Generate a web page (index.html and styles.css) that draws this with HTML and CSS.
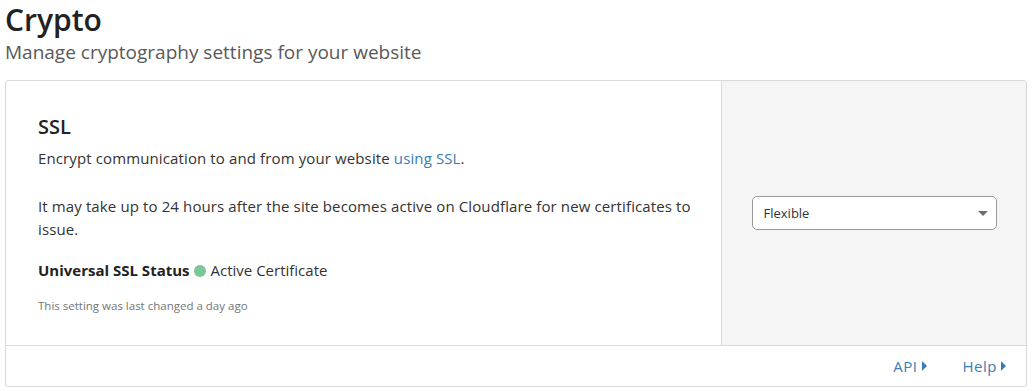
FILE: index.html
```html
<!DOCTYPE html>
<html>
<head>
<meta charset="utf-8">
<link rel="stylesheet" href="styles.css">
</head>
<body>
<div class="page">
  <h1 class="title">Crypto</h1>
  <p class="subtitle">Manage cryptography settings for your website</p>
  <div class="card">
    <div class="card-body">
      <div class="main">
        <h2 class="heading">SSL</h2>
        <p class="text">Encrypt communication to and from your website <a class="link" href="#">using SSL</a>.</p>
        <p class="text gap">It may take up to 24 hours after the site becomes active on Cloudflare for new certificates to issue.</p>
        <p class="status"><strong>Universal SSL Status</strong><span class="dot"></span>Active Certificate</p>
        <p class="changed">This setting was last changed a day ago</p>
      </div>
      <div class="side">
        <div class="select">
          <span>Flexible</span>
          <span class="caret"></span>
        </div>
      </div>
    </div>
    <div class="card-footer">
      <a class="flink" href="#">API<span class="tri"></span></a>
      <a class="flink" href="#">Help<span class="tri"></span></a>
    </div>
  </div>
</div>
</body>
</html>
```
FILE: styles.css
```css
* { box-sizing: border-box; }
html, body { margin: 0; padding: 0; background: #fff; }
body { font-family: "Open Sans", "Noto Sans", sans-serif; color: #333; }
.page { padding: 0 7px 0 5px; }
.title { margin: 0; padding-top: 2px; font-size: 30px; font-weight: 600; line-height: 36px; color: #222; }
.subtitle { margin: 0; font-size: 19px; line-height: 28px; color: #595959; }
.card { margin-top: 14px; border: 1px solid #d9d9d9; border-radius: 3px; }
.card-body { display: flex; border-bottom: 1px solid #d9d9d9; }
.main { flex: 1; padding: 32px 20px 31px 32px; }
.heading { margin: 0; font-size: 20px; font-weight: 600; line-height: 28px; color: #222; }
.text { margin: 6px 0 0; font-size: 15px; line-height: 23px; color: #333; letter-spacing: 0.12px; }
.text.gap { margin-top: 25px; }
.link { color: #3a7cb6; text-decoration: none; }
.status { margin: 18px 0 0; font-size: 15px; line-height: 23px; display: flex; align-items: center; color: #333; }
.status strong { font-weight: 700; color: #222; }
.dot { display: inline-block; width: 12px; height: 12px; border-radius: 50%; background: #7bc795; margin: 0 5px 0 4px; }
.changed { margin: 16px 0 0; font-size: 11.5px; line-height: 16px; color: #757575; }
.side { width: 305px; flex: none; background: #f5f5f6; border-left: 1px solid #d9d9d9; display: flex; align-items: center; justify-content: center; }
.select { width: 245px; height: 34px; background: #fff; border: 1px solid #9a9a9a; border-radius: 5px; display: flex; align-items: center; justify-content: space-between; padding: 0 8px 0 11px; font-size: 13px; color: #333; }
.caret { width: 0; height: 0; border-left: 5px solid transparent; border-right: 5px solid transparent; border-top: 5px solid #6f6f6f; }
.card-footer { height: 40px; display: flex; justify-content: flex-end; align-items: center; gap: 36px; padding-right: 20px; }
.flink { color: #3a7cb6; text-decoration: none; font-size: 15px; letter-spacing: 0.5px; display: flex; align-items: center; }
.tri { width: 0; height: 0; border-top: 5px solid transparent; border-bottom: 5px solid transparent; border-left: 5px solid #3a7cb6; margin-left: 4px; }
```
